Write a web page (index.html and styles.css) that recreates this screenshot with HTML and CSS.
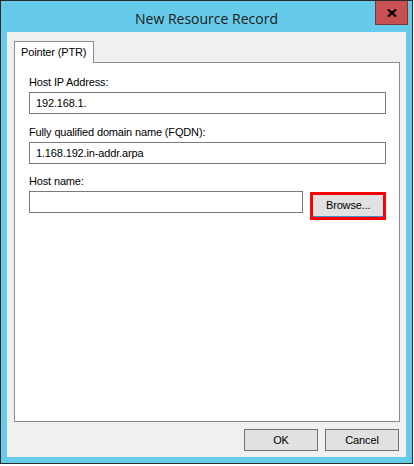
FILE: index.html
```html
<!DOCTYPE html>
<html>
<head>
<meta charset="utf-8">
<link rel="stylesheet" href="styles.css">
</head>
<body>
<div class="window">
  <div class="titlebar">
    <span class="title">New Resource Record</span>
    <div class="close">
      <svg width="10" height="8" viewBox="0 0 10 8"><path d="M1 0.5 L9 7.5 M9 0.5 L1 7.5" stroke="#000" stroke-width="2.2" fill="none"/></svg>
    </div>
  </div>
  <div class="client">
    <div class="tabs"><div class="tab">Pointer (PTR)</div></div>
    <div class="panel">
      <div class="field">
        <div class="label">Host IP Address:</div>
        <div class="input">192.168.1.</div>
      </div>
      <div class="field">
        <div class="label">Fully qualified domain name (FQDN):</div>
        <div class="input">1.168.192.in-addr.arpa</div>
      </div>
      <div class="field field-last">
        <div class="label">Host name:</div>
        <div class="row">
          <div class="input short"></div>
          <div class="browse">Browse...</div>
        </div>
      </div>
    </div>
    <div class="actions">
      <div class="btn">OK</div>
      <div class="btn">Cancel</div>
    </div>
  </div>
</div>
</body>
</html>
```
FILE: styles.css
```css
html, body {
  margin: 0;
  padding: 0;
  background: #ffffff;
}
body {
  font-family: "Liberation Sans", Arial, sans-serif;
  font-size: 11px;
  letter-spacing: -0.15px;
  color: #000;
}
.window {
  box-sizing: border-box;
  width: 413px;
  height: 464px;
  border: 1px solid #2b2b2b;
  background: #66cbea;
  display: flex;
  flex-direction: column;
}
.titlebar {
  position: relative;
  height: 31px;
  display: flex;
  align-items: center;
  justify-content: center;
}
.title {
  font-family: "Open Sans", sans-serif;
  font-size: 14px;
  letter-spacing: 0;
  color: #1a1a1a;
  padding-top: 3px;
}
.close {
  position: absolute;
  top: 0;
  right: 4px;
  box-sizing: border-box;
  width: 33px;
  height: 24px;
  background: #c75050;
  border: 1px solid #7e3434;
  border-top: none;
  display: flex;
  align-items: center;
  justify-content: center;
}
.client {
  margin: 0 6px;
  height: 425px;
  background: #f0f0f0;
  display: flex;
  flex-direction: column;
}
.tabs {
  padding: 9px 0 0 7px;
  display: flex;
  position: relative;
  z-index: 1;
  height: 21px;
}
.tab {
  box-sizing: border-box;
  width: 80px;
  height: 22px;
  background: #fff;
  border: 1px solid #898c95;
  border-bottom: none;
  padding: 4px 0 0 6px;
  white-space: nowrap;
}
.panel {
  box-sizing: border-box;
  margin: 0 6px 0 7px;
  height: 360px;
  background: #fff;
  border: 1px solid #898c95;
  padding: 11px 13px 0 14px;
}
.field {
  margin-bottom: 10px;
}
.field-last {
  margin-top: -1px;
}
.label {
  height: 16px;
  line-height: 16px;
  margin-bottom: 2px;
  white-space: nowrap;
}
.input {
  box-sizing: border-box;
  height: 22px;
  border: 1px solid #7a7a7a;
  background: #fff;
  padding: 0 0 0 6px;
  line-height: 20px;
}
.row {
  display: flex;
  align-items: flex-start;
  gap: 7px;
}
.input.short {
  width: 276px;
}
.browse {
  box-sizing: border-box;
  width: 76px;
  height: 28px;
  margin-top: 1px;
  border: 3px solid #ff0000;
  background: #e1e1e1;
  box-shadow: inset 0 -1px 0 #3c8fd3;
  text-align: center;
  line-height: 20px;
}
.actions {
  display: flex;
  justify-content: flex-end;
  gap: 7px;
  padding: 7px 7px 0 0;
}
.btn {
  box-sizing: border-box;
  width: 74px;
  height: 22px;
  background: #e1e1e1;
  border: 1px solid #707070;
  text-align: center;
  line-height: 20px;
}
```
